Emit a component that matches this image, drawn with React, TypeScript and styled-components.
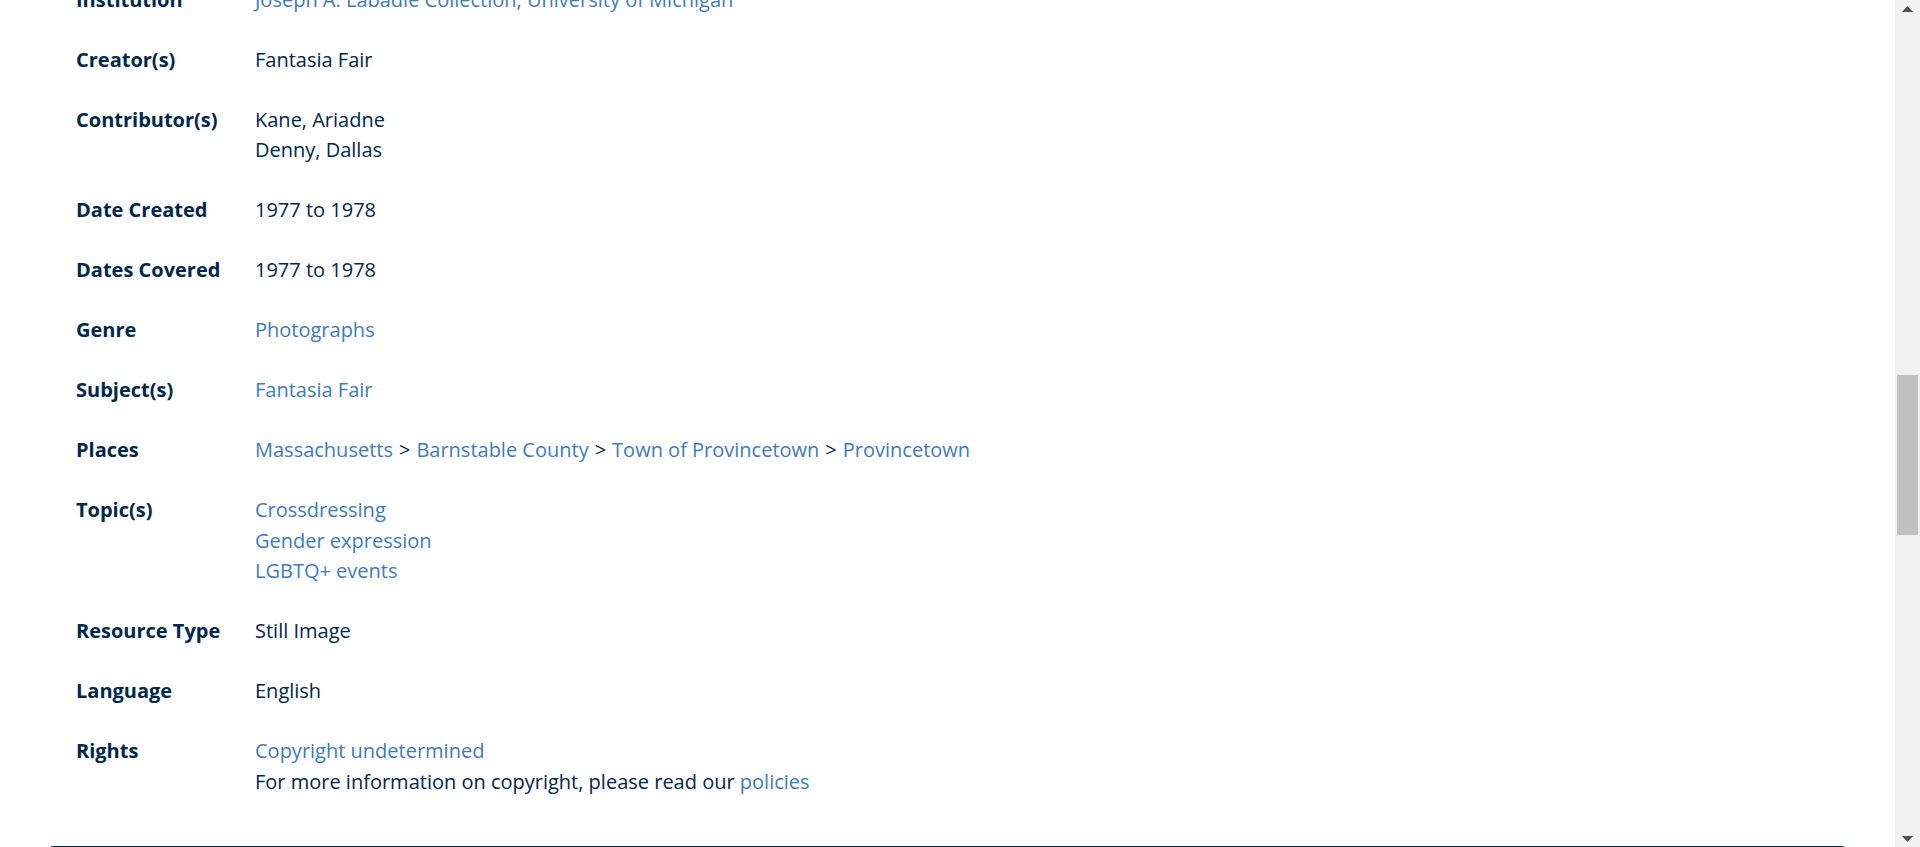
import React from "react";
import styled, { createGlobalStyle } from "styled-components";

const GlobalStyle = createGlobalStyle`
  html, body {
    margin: 0;
    padding: 0;
    height: 847px;
    overflow: hidden;
    background: #ffffff;
  }
  body {
    font-family: "Open Sans", "Noto Sans", Arial, sans-serif;
    -webkit-font-smoothing: antialiased;
  }
  * { box-sizing: border-box; }
`;

const Page = styled.div`
  display: flex;
  height: 847px;
  width: 1920px;
`;

const Main = styled.main`
  flex: 1;
  display: flex;
  flex-direction: column;
  padding: 0 44px;
  overflow: hidden;
`;

const MetaList = styled.dl`
  margin: -15.3px 0 0 0;
  padding: 0 0 0 32px;
  display: flex;
  flex-direction: column;
  gap: 29.4px;
`;

const Row = styled.div`
  display: grid;
  grid-template-columns: 179px 1fr;
  font-size: 20px;
  line-height: 30.6px;
`;

const Label = styled.dt`
  margin: 0;
  font-weight: 700;
  color: #00274c;
  white-space: nowrap;
`;

const Value = styled.dd`
  margin: 0;
  color: #00274c;
  display: flex;
  flex-direction: column;
`;

const Line = styled.span`
  display: block;
`;

const Link = styled.a`
  color: #3d7bbd;
  text-decoration: none;
`;

const Sep = styled.span`
  color: #00274c;
  margin: 0 6px;
`;

const Footer = styled.footer`
  margin-top: 48.5px;
  flex-shrink: 0;
  height: 320px;
  background: #00274c;
  border-radius: 10px 10px 0 0;
`;

const Scrollbar = styled.div`
  width: 25px;
  flex-shrink: 0;
  background: #f1f1f1;
  display: flex;
  flex-direction: column;
`;

const ArrowButton = styled.div`
  height: 17px;
  display: flex;
  align-items: center;
  justify-content: center;
  flex-shrink: 0;
`;

const Track = styled.div`
  flex: 1;
  display: flex;
  flex-direction: column;
  padding: 0 2px;
`;

const Thumb = styled.div`
  margin-top: 358px;
  height: 160px;
  background: #c1c1c1;
`;

type Item = { text: string; link?: boolean };

const rows: { label: string; lines: Item[][] }[] = [
  {
    label: "Institution",
    lines: [[{ text: "Joseph A. Labadie Collection, University of Michigan", link: true }]],
  },
  { label: "Creator(s)", lines: [[{ text: "Fantasia Fair" }]] },
  {
    label: "Contributor(s)",
    lines: [[{ text: "Kane, Ariadne" }], [{ text: "Denny, Dallas" }]],
  },
  { label: "Date Created", lines: [[{ text: "1977 to 1978" }]] },
  { label: "Dates Covered", lines: [[{ text: "1977 to 1978" }]] },
  { label: "Genre", lines: [[{ text: "Photographs", link: true }]] },
  { label: "Subject(s)", lines: [[{ text: "Fantasia Fair", link: true }]] },
  {
    label: "Topic(s)",
    lines: [
      [{ text: "Crossdressing", link: true }],
      [{ text: "Gender expression", link: true }],
      [{ text: "LGBTQ+ events", link: true }],
    ],
  },
  { label: "Resource Type", lines: [[{ text: "Still Image" }]] },
  { label: "Language", lines: [[{ text: "English" }]] },
  {
    label: "Rights",
    lines: [
      [{ text: "Copyright undetermined", link: true }],
      [
        { text: "For more information on copyright, please read our " },
        { text: "policies", link: true },
      ],
    ],
  },
];

const places = ["Massachusetts", "Barnstable County", "Town of Provincetown", "Provincetown"];

const renderLine = (items: Item[], key: number) => (
  <Line key={key}>
    {items.map((it, i) =>
      it.link ? (
        <Link key={i} href="#">
          {it.text}
        </Link>
      ) : (
        <React.Fragment key={i}>{it.text}</React.Fragment>
      )
    )}
  </Line>
);

const UpArrow = () => (
  <svg width="11" height="6" viewBox="0 0 11 6">
    <polygon points="5.5,0 11,6 0,6" fill="#505050" />
  </svg>
);

const DownArrow = () => (
  <svg width="11" height="6" viewBox="0 0 11 6">
    <polygon points="0,0 11,0 5.5,6" fill="#505050" />
  </svg>
);

export default function App() {
  const before = rows.slice(0, 7);
  const after = rows.slice(7);
  return (
    <>
      <GlobalStyle />
      <Page>
        <Main>
          <MetaList>
            {before.map((r) => (
              <Row key={r.label}>
                <Label>{r.label}</Label>
                <Value>{r.lines.map(renderLine)}</Value>
              </Row>
            ))}
            <Row>
              <Label>Places</Label>
              <Value>
                <Line>
                  {places.map((p, i) => (
                    <React.Fragment key={p}>
                      {i > 0 && <Sep>&gt;</Sep>}
                      <Link href="#">{p}</Link>
                    </React.Fragment>
                  ))}
                </Line>
              </Value>
            </Row>
            {after.map((r) => (
              <Row key={r.label}>
                <Label>{r.label}</Label>
                <Value>{r.lines.map(renderLine)}</Value>
              </Row>
            ))}
          </MetaList>
          <Footer />
        </Main>
        <Scrollbar>
          <ArrowButton>
            <UpArrow />
          </ArrowButton>
          <Track>
            <Thumb />
          </Track>
          <ArrowButton>
            <DownArrow />
          </ArrowButton>
        </Scrollbar>
      </Page>
    </>
  );
}
